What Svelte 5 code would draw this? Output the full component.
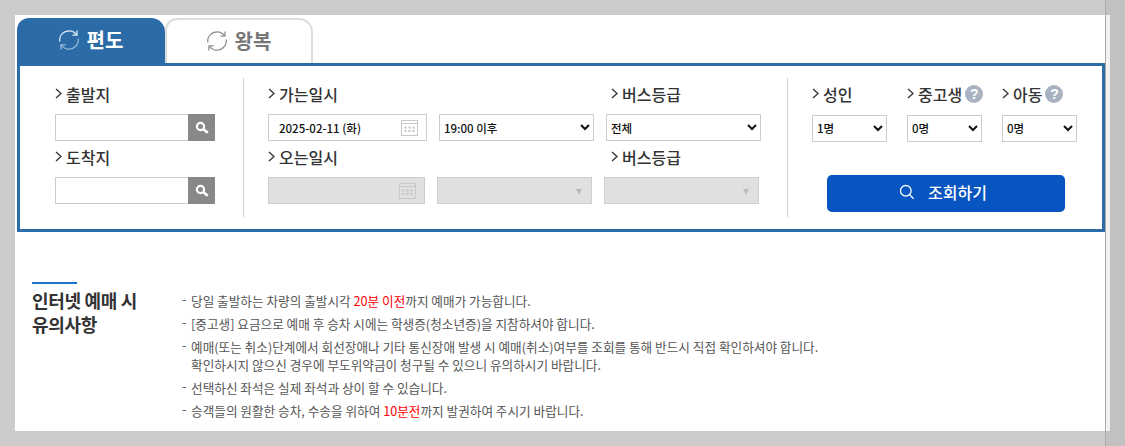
<script>
	const notices = [
		[['당일 출발하는 차량의 출발시각 '], ['20분 이전', true], ['까지 예매가 가능합니다.']],
		[['[중고생] 요금으로 예매 후 승차 시에는 학생증(청소년증)을 지참하셔야 합니다.']],
		[['예매(또는 취소)단계에서 회선장애나 기타 통신장애 발생 시 예매(취소)여부를 조회를 통해 반드시 직접 확인하셔야 합니다.'], ['\n'], ['확인하시지 않으신 경우에 부도위약금이 청구될 수 있으니 유의하시기 바랍니다.']],
		[['선택하신 좌석은 실제 좌석과 상이 할 수 있습니다.']],
		[['승객들의 원활한 승차, 수송을 위하여 '], ['10분전', true], ['까지 발권하여 주시기 바랍니다.']]
	]
</script>

{#snippet label(text, help = false)}
	<div class="label">
		<svg class="arrow" width="7" height="11" viewBox="0 0 7 11"><path d="M1 1l5 4.5L1 10" fill="none" stroke="#333" stroke-width="1.3" /></svg>
		<span>{text}</span>
		{#if help}<i class="help">?</i>{/if}
	</div>
{/snippet}

{#snippet place()}
	<div class="place">
		<input type="text" />
		<button class="find" aria-label="찾기">
			<svg width="14" height="14" viewBox="0 0 14 14"><circle cx="5.5" cy="5.5" r="3.6" fill="none" stroke="#fff" stroke-width="2.2" /><path d="M8 8l4.8 3.8" stroke="#fff" stroke-width="2.6" /></svg>
		</button>
	</div>
{/snippet}

{#snippet calendar()}
	<svg class="cal" width="17" height="16" viewBox="0 0 17 16">
		<rect x=".5" y=".5" width="16" height="15" fill="none" stroke="#c9c9c9" />
		<path d="M1 3.5h15" stroke="#c9c9c9" />
		<path d="M3.500 6.500h2v2h-2zM7.500 6.500h2v2h-2zM11.500 6.500h2v2h-2zM3.500 10h2v2h-2zM7.500 10h2v2h-2zM11.500 10h2v2h-2z" fill="#c4c4c4" />
	</svg>
{/snippet}

{#snippet refresh(top, bottom)}
	<svg width="22" height="22" viewBox="0 0 22 22" fill="none" stroke-width="1.3">
		<path d="M1.700 12.500A9.400 9.400 0 0 1 18.300 5.400" stroke={top} />
		<path d="M19 1.500v4.600h-4.600" stroke={top} />
		<path d="M20.300 9.500A9.400 9.400 0 0 1 3.700 16.600" stroke={bottom} />
		<path d="M3 20.500v-4.600h4.600" stroke={bottom} />
	</svg>
{/snippet}

<main class="panel">
	<nav class="tabs">
		<button class="tab on">{@render refresh('#e8eff6', '#9dbcd8')}편도</button>
		<button class="tab">{@render refresh('#8a8a8a', '#8a8a8a')}왕복</button>
	</nav>

	<section class="box">
		<div class="col places">
			{@render label('출발지')}
			{@render place()}
			{@render label('도착지')}
			{@render place()}
		</div>

		<div class="col dates">
			<div class="row">
				<div class="first">{@render label('가는일시')}</div>
				<div class="grade">{@render label('버스등급')}</div>
			</div>
			<div class="fields">
				<div class="date">2025-02-11 (화){@render calendar()}</div>
				<select class="time"><option>19:00 이후</option></select>
				<select class="time"><option>전체</option></select>
			</div>
			<div class="row">
				<div class="first">{@render label('오는일시')}</div>
				<div class="grade">{@render label('버스등급')}</div>
			</div>
			<div class="fields off">
				<div class="date">{@render calendar()}</div>
				<div class="time dis"></div>
				<div class="time dis"></div>
			</div>
		</div>

		<div class="col people">
			<div class="counts">
				<div>{@render label('성인')}<select><option>1명</option></select></div>
				<div>{@render label('중고생', true)}<select><option>0명</option></select></div>
				<div>{@render label('아동', true)}<select><option>0명</option></select></div>
			</div>
			<button class="go">
				<svg width="16" height="16" viewBox="0 0 16 16" fill="none" stroke="#fff" stroke-width="1.300"><circle cx="6.800" cy="6.800" r="5.300" /><path d="M10.600 10.600l4 4.200" /></svg>
				조회하기
			</button>
		</div>
	</section>

	<section class="notice">
		<h2>인터넷 예매 시<br />유의사항</h2>
		<ul>
			{#each notices as parts}
				<li>{#each parts as [text, red]}{#if text === '\n'}<br />{:else if red}<em>{text}</em>{:else}{text}{/if}{/each}</li>
			{/each}
		</ul>
	</section>
</main>

<div class="gutter"></div>

<style>
	:global(body) {
		background: #ccc;
		height: 446px;
		overflow: hidden;
		font-family: "Noto Sans CJK KR", "Noto Sans", sans-serif;
	}

	.panel {
		position: relative;
		margin: 15px 0 0 15px;
		width: 1095px;
		height: 416px;
		padding: 3px 0 0 2px;
		box-sizing: border-box;
		background: #fff;
	}

	.tabs {
		display: flex;
		height: 45px;
	}

	.tab {
		display: flex;
		align-items: center;
		justify-content: center;
		gap: 7px;
		width: 148px;
		height: 45px;
		padding: 0 1px 1px 0;
		border: 2px solid #ddd;
		border-bottom: 0;
		border-radius: 12px 14px 0 0;
		background: #fff;
		color: #777;
		font: 700 20px/1 "Noto Sans CJK KR", sans-serif;
	}

	.tab.on {
		border: 0;
		background: #2b6ca8;
		color: #fff;
	}

	.box {
		display: flex;
		width: 1088px;
		height: 169px;
		box-sizing: border-box;
		padding: 12px 0;
		border: 3px solid #2b6ca8;
	}

	.col {
		box-sizing: border-box;
		height: 139px;
	}

	.places {
		width: 224px;
		padding-left: 35px;
		border-right: 1px solid #d0d0d0;
	}

	.dates {
		width: 544px;
		padding-left: 24px;
		border-right: 1px solid #d0d0d0;
	}

	.people {
		width: 314px;
		padding-left: 24px;
	}

	.label {
		display: flex;
		align-items: center;
		height: 36px;
		padding-bottom: 5px;
		box-sizing: border-box;
		color: #333;
		font-size: 16px;
		font-weight: 500;
		white-space: nowrap;
	}

	.arrow {
		flex: none;
		margin-right: 4px;
	}

	.help {
		display: inline-block;
		flex: none;
		width: 18px;
		height: 18px;
		margin-left: 3px;
		border-radius: 50%;
		background: #a9b2c1;
		color: #fff;
		font: 700 14px/18px "Liberation Sans", sans-serif;
		text-align: center;
	}

	.place {
		display: flex;
		width: 160px;
		height: 27px;
	}

	.place input {
		flex: 1;
		min-width: 0;
		box-sizing: border-box;
		border: 1px solid #ccc;
		border-right: 0;
		padding: 0;
		outline: 0;
	}

	.find {
		display: flex;
		align-items: center;
		justify-content: center;
		width: 27px;
		padding: 0;
		border: 0;
		background: #888;
	}

	.row {
		display: flex;
	}

	.first {
		width: 343px;
	}

	.fields {
		display: flex;
		height: 27px;
		gap: 12px;
	}

	.date {
		display: flex;
		align-items: center;
		justify-content: space-between;
		width: 159px;
		box-sizing: border-box;
		padding: 0 8px 0 10px;
		border: 1px solid #ccc;
		color: #111;
		font-size: 11.5px;
		font-weight: 500;
	}

	select {
		height: 27px;
		box-sizing: border-box;
		border: 1px solid #ccc;
		border-radius: 0;
		background: #fff;
		color: #111;
		font-family: "Noto Sans CJK KR", sans-serif;
		font-size: 11.5px;
		font-weight: 500;
		outline: 0;
	}

	.time {
		width: 155px;
		box-sizing: border-box;
	}

	.off .date {
		width: 157px;
		justify-content: flex-end;
		background: #e0e0e0;
	}

	.dis {
		position: relative;
		border: 1px solid #d0d0d0;
		background: #e0e0e0;
	}

	.dis::after {
		content: "";
		position: absolute;
		right: 9px;
		top: 11px;
		border: 3.500px solid transparent;
		border-top: 6px solid #bbb;
		border-bottom: 0;
	}

	.counts {
		display: grid;
		grid-template-columns: repeat(3, 75px);
		gap: 20px;
	}

	.counts select {
		width: 75px;
	}

	.go {
		display: flex;
		align-items: center;
		justify-content: center;
		gap: 13px;
		width: 238px;
		height: 37px;
		margin: 33px 0 0 15px;
		padding: 0 6px 2px 0;
		border: 0;
		border-radius: 5px;
		background: #0854c0;
		color: #fff;
		font: 500 16px/1 "Noto Sans CJK KR", sans-serif;
	}

	.notice {
		display: flex;
		margin: 50px 0 0 15px;
	}

	h2 {
		width: 150px;
		margin: 0;
		padding-top: 6px;
		position: relative;
		color: #333;
		font-size: 18px;
		font-weight: 700;
		line-height: 24px;
		letter-spacing: -0.3px;
	}

	h2::before {
		content: "";
		position: absolute;
		left: 0;
		top: 0;
		width: 45px;
		height: 2px;
		background: #1a75c8;
	}

	ul {
		margin: 10px 0 0;
		padding: 0;
		list-style: none;
		color: #555;
		font-size: 12.65px;
		line-height: 18px;
		white-space: nowrap;
	}

	li {
		position: relative;
		margin-bottom: 5px;
		padding-left: 9px;
	}

	li::before {
		content: "-";
		position: absolute;
		left: 0;
		top: -2px;
	}

	em {
		color: #f00;
		font-style: normal;
	}

	.gutter {
		position: absolute;
		left: 1105px;
		top: 0;
		width: 20px;
		height: 446px;
		box-sizing: border-box;
		border-left: 1px solid #aaa;
		background: rgba(0, 0, 0, 0.05);
	}
</style>
